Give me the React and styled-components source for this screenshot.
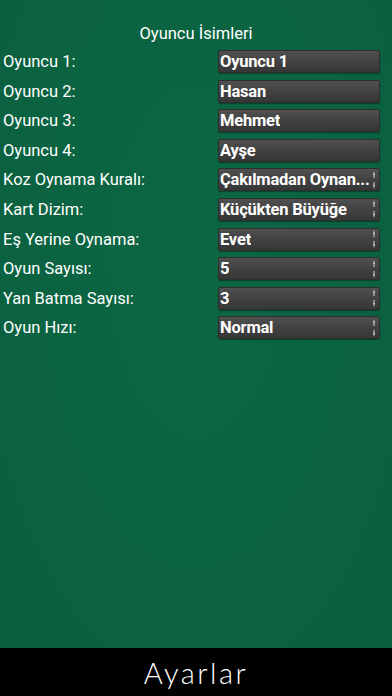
import React from "react";
import styled, { createGlobalStyle } from "styled-components";

const Global = createGlobalStyle`
  html, body { margin: 0; padding: 0; height: 100%; }
  body { font-family: Roboto, "Noto Sans", sans-serif; background: #000; }
  #root { height: 100%; }
`;

const Screen = styled.div`
  width: 392px;
  height: 696px;
  display: flex;
  flex-direction: column;
  overflow: hidden;
`;

const Table = styled.main`
  flex: 1;
  background: radial-gradient(ellipse at 50% 40%, #0c6743 0%, #0b6341 60%, #0a5e3e 100%);
  padding-top: 24px;
  display: flex;
  flex-direction: column;
`;

const Title = styled.h1`
  margin: 0 0 6px 0;
  height: 20px;
  line-height: 20px;
  text-align: center;
  font-size: 16.5px;
  font-weight: 400;
  color: #fff;
`;

const Form = styled.div`
  display: flex;
  flex-direction: column;
  gap: 6.6px;
`;

const Row = styled.div`
  display: grid;
  grid-template-columns: 218px 162px;
  align-items: center;
  height: 23px;
`;

const Label = styled.label`
  padding-left: 3px;
  font-size: 16.5px;
  color: #fff;
  white-space: nowrap;
`;

const Field = styled.div`
  height: 23px;
  box-sizing: border-box;
  display: flex;
  align-items: center;
  justify-content: space-between;
  padding: 0 2px 0 1px;
  border: 1px solid #2c2f2c;
  border-radius: 2px;
  background: linear-gradient(#505050 0%, #434343 45%, #363636 100%);
  box-shadow: 0 1px 1px rgba(0, 0, 0, 0.35);
  color: #fff;
  font-size: 16.5px;
  font-weight: 700;
  letter-spacing: -0.2px;
  white-space: nowrap;
  overflow: hidden;
`;

const Value = styled.span`
  min-width: 0;
  overflow: hidden;
  text-overflow: clip;
`;

const Spinner = styled.svg`
  flex: none;
  width: 6px;
  height: 20px;
  margin-left: 1px;
`;

const Footer = styled.footer`
  height: 48px;
  background: #000;
  display: flex;
  align-items: center;
  justify-content: center;
  color: #fff;
  font-family: "Lato", "Noto Sans", sans-serif;
  font-size: 29px;
  font-weight: 300;
  letter-spacing: 2.5px;
`;

const Arrows = () => (
  <Spinner viewBox="0 0 6 20">
    <path d="M3 1 L4 5 L3.5 5 L3.5 8 L2.5 8 L2.5 5 L2 5 Z" fill="#d4d4d4" />
    <path d="M3 19 L4 15 L3.5 15 L3.5 12 L2.5 12 L2.5 15 L2 15 Z" fill="#d4d4d4" />
  </Spinner>
);

const rows = [
  { label: "Oyuncu 1:", value: "Oyuncu 1" },
  { label: "Oyuncu 2:", value: "Hasan" },
  { label: "Oyuncu 3:", value: "Mehmet" },
  { label: "Oyuncu 4:", value: "Ayşe" },
  { label: "Koz Oynama Kuralı:", value: "Çakılmadan Oynan...", select: true },
  { label: "Kart Dizim:", value: "Küçükten Büyüğe", select: true },
  { label: "Eş Yerine Oynama:", value: "Evet", select: true },
  { label: "Oyun Sayısı:", value: "5", select: true },
  { label: "Yan Batma Sayısı:", value: "3", select: true },
  { label: "Oyun Hızı:", value: "Normal", select: true },
];

export default function App() {
  return (
    <>
      <Global />
      <Screen>
        <Table>
          <Title>Oyuncu İsimleri</Title>
          <Form>
            {rows.map((r) => (
              <Row key={r.label}>
                <Label>{r.label}</Label>
                <Field>
                  <Value>{r.value}</Value>
                  {r.select && <Arrows />}
                </Field>
              </Row>
            ))}
          </Form>
        </Table>
        <Footer>Ayarlar</Footer>
      </Screen>
    </>
  );
}
